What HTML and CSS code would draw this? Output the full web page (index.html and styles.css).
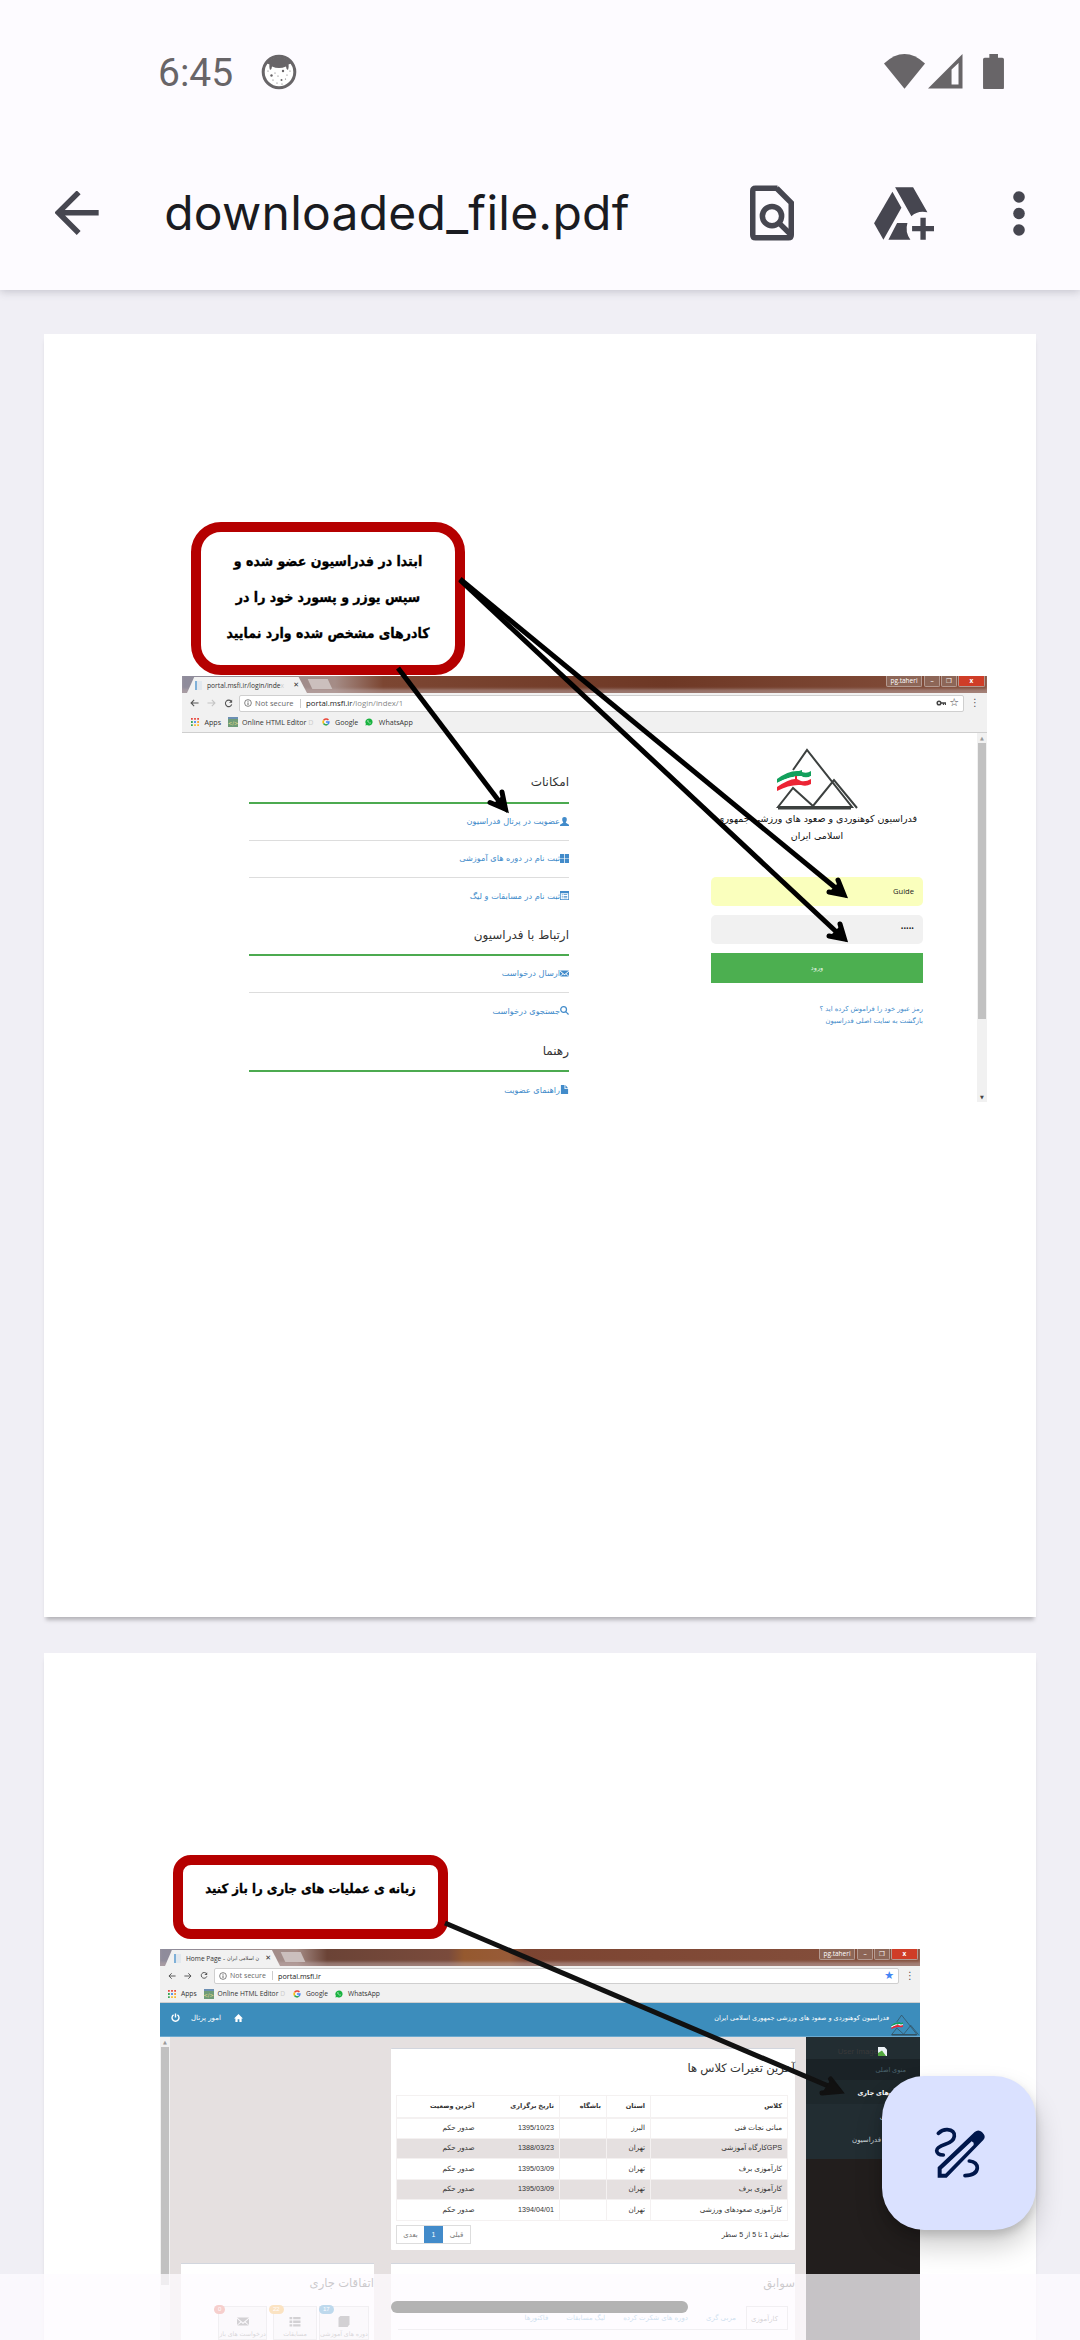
FILE: index.html
```html
<!DOCTYPE html>
<html lang="en">
<head>
<meta charset="utf-8">
<title>downloaded_file.pdf</title>
<link rel="stylesheet" href="styles.css">
</head>
<body>
<svg width="0" height="0" class="defs">
  <symbol id="logo" viewBox="0 0 82 62">
    <g fill="none" stroke="currentColor" stroke-width="2">
      <path d="M17 22 31 2 76 59H2L17 40 37 58 58 32 81 60"/>
      <path d="M2 60H75" stroke-width="3"/>
    </g>
    <path d="M1 31Q13 22 23 23L26 22V24Q31 26 35 23V28Q30 31 25 28Q14 28 1 35Z" fill="#12a05c"/>
    <path d="M1 35Q14 28 25 28Q30 31 35 28V32Q30 35 25 32Q14 32 1 38Z" fill="#fff"/>
    <path d="M1 39Q13 31 19 31V28H21V31L25 33Q30 34 35 31V36Q30 39 25 37Q14 36 1 43Z" fill="#ec2434"/>
  </symbol>
  <symbol id="back" viewBox="0 0 10 8"><path d="M9.5 4H1.2M4.6.6 1.2 4l3.4 3.4" fill="none" stroke="currentColor" stroke-width="1.2"/></symbol>
  <symbol id="reload" viewBox="0 0 10 10"><path d="M8 2.6A3.6 3.6 0 1 0 8.6 6" fill="none" stroke="#555" stroke-width="1.2"/><path d="M9 .8V4.3H5.5Z" fill="#555"/></symbol>
  <symbol id="info" viewBox="0 0 10 10"><circle cx="5" cy="5" r="4.2" fill="none" stroke="#555" stroke-width=".9"/><path d="M5 4.3V7.6M5 2.3V3.4" stroke="#555" stroke-width="1.1"/></symbol>
  <symbol id="apps" viewBox="0 0 9 9">
    <path d="M0 0h2v2H0zM3.5 0h2v2h-2zM7 0h2v2H7z" fill="#e8453c"/>
    <path d="M0 3.5h2v2H0z" fill="#3aa757"/><path d="M3.5 3.5h2v2h-2z" fill="#4688f1"/><path d="M7 3.5h2v2H7z" fill="#f5a13c"/>
    <path d="M0 7h2v2H0z" fill="#3aa757"/><path d="M3.5 7h2v2h-2zM7 7h2v2H7z" fill="#f9bb2d"/>
  </symbol>
  <symbol id="google" viewBox="0 0 10 10" fill="none" stroke-width="1.9">
    <path d="M8 2.6A3.6 3.6 0 0 0 2 3.1" stroke="#ea4335"/><path d="M2 3.1A3.6 3.6 0 0 0 2 6.9" stroke="#fbbc05"/>
    <path d="M2 6.9A3.6 3.6 0 0 0 7.3 7.8" stroke="#34a853"/><path d="M7.3 7.8A3.6 3.6 0 0 0 8.6 5H5" stroke="#4285f4"/>
  </symbol>
  <symbol id="whatsapp" viewBox="0 0 10 10"><path d="M5 .5A4.5 4.5 0 1 1 2.7 8.9L.5 9.5 1.1 7.3A4.5 4.5 0 0 1 5 .5Z" fill="#18b33f"/><path d="M3.3 2.7Q2.6 3.6 3.6 5T6.4 7Q7.3 6.7 7.2 6L6 5.6 5.4 6.2Q4.3 5.7 4 4.8L4.4 4.2 4 2.8Z" fill="#fff"/></symbol>
  <symbol id="mail" viewBox="0 0 12 10"><path d="M0 1H12L6 6Z M0 2.3 3.4 5.2 0 8.4ZM12 2.3 8.6 5.2 12 8.4ZM.3 9 4.2 5.9 6 7.4 7.8 5.9 11.7 9Z" fill="currentColor"/></symbol>
</svg>

<header class="top">
  <div class="status">
    <span class="clock">6:45</span>
    <svg class="face" viewBox="0 0 36 36"><circle cx="18" cy="18" r="15.8" fill="#fff" stroke="#686568" stroke-width="3"/><path d="M5 9Q18-3 31 9L27.500 10.500Q28 13 27 16 25 15 25 12.500 18 15.500 11 12.500 11 15 9 16 8 13 8.500 10.500Z" fill="#686568"/><g fill="#686568"><circle cx="10.500" cy="21.500" r="1.200"/><circle cx="22" cy="17" r="1.200"/><circle cx="20.500" cy="26" r="1"/><circle cx="14" cy="19" r=".6"/><circle cx="26" cy="21" r=".6"/><circle cx="17" cy="22" r=".6"/><circle cx="24.500" cy="25" r=".6"/><circle cx="12" cy="26" r=".6"/><circle cx="16" cy="29" r=".6"/><circle cx="7" cy="17" r=".6"/><circle cx="29" cy="17" r=".6"/><circle cx="21" cy="30" r=".6"/></g></svg>
    <svg class="wifi" viewBox="0 0 122 104"><path d="M0 28Q61-28 122 28L61 103Z"/></svg>
    <svg class="signal" viewBox="0 0 104 104"><path fill-rule="evenodd" d="M0 104 104 0V104ZM71 92H92V27L71 47Z"/></svg>
    <svg class="battery" viewBox="0 0 63 107"><path d="M19 0H45V11H58Q63 11 63 16V101Q63 107 58 107H5Q0 107 0 101V16Q0 11 5 11H19Z"/></svg>
  </div>
  <div class="appbar">
    <svg class="arrow" viewBox="0 0 131 130"><path d="M131 65H12M71 4 10 65 71 126" fill="none" stroke="#464650" stroke-width="16.500"/></svg>
    <h1>downloaded_file.pdf</h1>
    <svg class="find" viewBox="4 2 16 20"><g fill="none" stroke="#464650" stroke-width="2"><path d="M14 3H6Q5 3 5 4V20Q5 21 6 21H18Q19 21 19 20V8.300L13.700 3"/><circle cx="12" cy="13.100" r="3.500"/><path d="M14.300 15.400 19 20"/></g></svg>
    <svg class="drive" viewBox="460 435 181 159" fill="#464650"><path d="M515 449 542 497 488 593 460 544Z"/><path d="M523 436H577L620 511Q590 505 572 523Z"/><path d="M529 543H560Q552 570 569 593H503Z"/><path d="M599 527h16v25h25v16h-25v25h-16v-25h-25v-16h25z"/></svg>
    <svg class="dots" viewBox="0 0 12 45" fill="#464650"><circle cx="6" cy="6" r="5.800"/><circle cx="6" cy="22.500" r="5.800"/><circle cx="6" cy="39" r="5.800"/></svg>
  </div>
</header>

<main class="doc">
  <section class="page page-one">
    <div class="callout callout-one" lang="fa" dir="rtl">ابتدا در فدراسیون عضو شده و<br>سپس یوزر و پسورد خود را در<br>کادرهای مشخص شده وارد نمایید</div>
    <div class="browser browser-one">
      <div class="tabs">
        <div class="tab"><i class="fav"></i><span>portal.msfi.ir/login/inde<em>x</em></span><b>✕</b></div><i class="newtab"></i>
        <div class="win"><span>pg.taheri</span><span class="mn">–</span><span class="mx">❐</span><span class="cl">x</span></div>
      </div>
      <div class="bar">
        <svg class="nav"><use href="#back"/></svg><svg class="nav off flip"><use href="#back"/></svg><svg class="nav re"><use href="#reload"/></svg>
        <div class="url"><svg><use href="#info"/></svg><span class="ns">Not secure</span><span class="addr">portal.msfi.ir<em>/login/index/1</em></span><svg class="key" viewBox="0 0 10 8"><path d="M5 4H9.500V6M7.500 4V6" fill="none" stroke="#444" stroke-width="1.300"/><circle cx="3" cy="4" r="1.800" fill="none" stroke="#444" stroke-width="1.500"/></svg><span class="star">☆</span></div>
        <span class="menu">⋮</span>
      </div>
      <div class="marks"><svg><use href="#apps"/></svg><span>Apps</span><i class="code">&lt;/&gt;</i><span class="ed">Online HTML Editor <em>D</em></span><svg><use href="#google"/></svg><span>Google</span><svg><use href="#whatsapp"/></svg><span>WhatsApp</span></div>
      <div class="login" lang="fa" dir="rtl">
        <div class="rail"><i>▲</i><div class="thumb"></div><i class="down">▼</i></div>
        <div class="form">
          <svg class="logo"><use href="#logo"/></svg>
          <p class="org">فدراسیون کوهنوردی و صعود های ورزشی جمهوری<br>اسلامی ایران</p>
          <div class="field user">Guide</div>
          <div class="field pass">•••••</div>
          <div class="enter">ورود</div>
          <p class="help">رمز عبور خود را فراموش کرده اید ؟<br>بازگشت به سایت اصلی فدراسیون</p>
        </div>
        <div class="links">
          <h2>امکانات</h2>
          <a><svg viewBox="0 0 10 10"><path d="M5 0Q8 0 7.500 3.500 7 5 6.500 5.500V6.500L10 8.500V10H0V8.500L3.500 6.500V5.500Q3 5 2.500 3.500 2 0 5 0Z"/></svg>عضویت در پرتال فدراسیون</a>
          <a><svg viewBox="0 0 10 10"><path d="M0 0h4.600v4.600H0zM5.400 0H10v4.600H5.400zM0 5.400h4.600V10H0zM5.400 5.400H10V10H5.400z"/></svg>ثبت نام در دوره های آموزشی</a>
          <a class="last"><svg viewBox="0 0 10 10"><path fill-rule="evenodd" d="M0 0H10V10H0ZM.8 2.500V9.200H9.200V2.500ZM2 3.600H3V4.600H2ZM4 3.600H8V4.400H4ZM2 5.500H3V6.300H2ZM4 5.500H8V6.300H4ZM2 7.300H3V8H2ZM4 7.300H8V8H4Z"/></svg>ثبت نام در مسابقات و لیگ</a>
          <h2 class="second">ارتباط با فدراسیون</h2>
          <a><svg viewBox="0 0 12 10"><use href="#mail" width="12" height="10"/></svg>ارسال درخواست</a>
          <a class="last"><svg viewBox="0 0 10 10"><circle cx="4" cy="4" r="3.200" fill="none" stroke="#428bca" stroke-width="1.400"/><path d="M6 6.800 7 6 10 9 9 10Z"/></svg>جستجوی درخواست</a>
          <h2 class="third">رهنما</h2>
          <a class="last"><svg viewBox="0 0 10 10"><path d="M1 0H5V4.500H9V10H1ZM6 0 9 3.500H6Z"/></svg>راهنمای عضویت</a>
        </div>
      </div>
    </div>
    <svg class="marker" viewBox="44 334 992 1283"><g fill="none" stroke="#000" stroke-width="5">
      <path d="M398 668 505 809"/><path d="M460 579 843 894"/><path d="M460 580 844 939"/></g>
      <g fill="none" stroke="#000" stroke-width="5" stroke-linecap="round"><path d="M502 792 505.500 809 490 802.500M838 880 844 895 829 892M840 924 844.500 939 829 936"/></g>
      <path d="M507 813 494 803 503 795ZM847 898 830 891 838 883ZM847 942 831 935 839 927Z"/>
    </svg>
  </section>

  <section class="page page-two">
    <div class="callout callout-two" lang="fa" dir="rtl">زبانه ی عملیات های جاری را باز کنید</div>
    <div class="browser browser-two">
      <div class="tabs">
        <div class="tab"><i class="fav"></i><span class="home">Home Page - </span><bdi>ن اسلامی ایران</bdi><b>✕</b></div><i class="newtab"></i>
        <div class="win"><span>pg.taheri</span><span class="mn">–</span><span class="mx">❐</span><span class="cl">x</span></div>
      </div>
      <div class="bar">
        <svg class="nav"><use href="#back"/></svg><svg class="nav flip"><use href="#back"/></svg><svg class="nav re"><use href="#reload"/></svg>
        <div class="url"><svg><use href="#info"/></svg><span class="ns">Not secure</span><span class="addr">portal.msfi.ir</span><span class="star on">★</span></div>
        <span class="menu">⋮</span>
      </div>
      <div class="marks"><svg><use href="#apps"/></svg><span>Apps</span><i class="code">&lt;/&gt;</i><span class="ed">Online HTML Editor <em>D</em></span><svg><use href="#google"/></svg><span>Google</span><svg><use href="#whatsapp"/></svg><span>WhatsApp</span></div>
      <div class="blue" lang="fa" dir="rtl">
        <svg class="logo"><use href="#logo"/></svg><span class="name">فدراسیون کوهنوردی و صعود های ورزشی جمهوری اسلامی ایران</span>
        <svg class="house" viewBox="0 0 10 9"><path d="M5 0 10 5H8.500V9H6V6H4V9H1.500V5H0Z" fill="#fff"/></svg><span class="portal">امور پرتال</span>
        <svg class="power" viewBox="0 0 9 9"><path d="M2.600 1.800A3.500 3.500 0 1 0 6.400 1.800M4.500 .5V4.500" fill="none" stroke="#fff" stroke-width="1.400"/></svg>
      </div>
      <div class="dash" lang="fa" dir="rtl">
        <aside class="side">
          <div class="user-row"><svg viewBox="0 0 9 9"><path d="M0 0H6.500L9 2.500V9H0Z" fill="#eef3f8"/><path d="M0 9V6L4 3.500 8 9Z" fill="#53a83f"/></svg><span>User Image</span></div>
          <div class="menu-head">منوی اصلی</div>
          <div class="menu-item active">عملیات‌های جاری</div>
          <div class="menu-item">شخصی</div>
          <div class="menu-item wide">پرتال فدراسیون</div>
        </aside>
        <div class="col-main">
          <div class="card changes">
            <h3>آخرین تغیرات کلاس ها</h3>
            <table>
              <colgroup><col class="c1"><col class="c2"><col class="c3"><col class="c4"><col class="c5"></colgroup>
              <tr><th>کلاس</th><th>استان</th><th>باشگاه</th><th>تاریخ برگزاری</th><th>آخرین وضعیت</th></tr>
              <tr><td>مبانی نجات فنی</td><td>البرز</td><td></td><td>1395/10/23</td><td>صدور حکم</td></tr>
              <tr><td><bdo dir="ltr">GPS</bdo>کارگاه آموزشی</td><td>تهران</td><td></td><td>1388/03/23</td><td>صدور حکم</td></tr>
              <tr><td>کارآموزی برف</td><td>تهران</td><td></td><td>1395/03/09</td><td>صدور حکم</td></tr>
              <tr><td>کارآموزی برف</td><td>تهران</td><td></td><td>1395/03/09</td><td>صدور حکم</td></tr>
              <tr><td>کارآموزی صعودهای ورزشی</td><td>تهران</td><td></td><td>1394/04/01</td><td>صدور حکم</td></tr>
            </table>
            <div class="foot"><span>نمایش 1 تا 5 از 5 سطر</span><div class="pager"><span>قبلی</span><b>1</b><span>بعدی</span></div></div>
          </div>
          <div class="card history">
            <h3>سوابق</h3>
            <div class="subtabs"><b>کارآموزی</b><span>مربی گری</span><span>دوره های شکرت کرده</span><span>لیگ مسابقات</span><span>فاکتورها</span></div>
          </div>
        </div>
        <div class="col-left">
          <div class="card events">
            <h3>اتفاقات جاری</h3>
            <div class="tiles">
              <div class="tile t1"><em>17</em><svg viewBox="0 0 12 12"><path d="M2 0H12V9L10 12H0V2Z"/></svg>دوره های آموزشی</div>
              <div class="tile t2"><em>22</em><svg viewBox="0 0 12 12"><path d="M0 1h3v2.500H0zM4 1h8v2.500H4zM0 5h3v2.500H0zM4 5h8v2.500H4zM0 9h3v2.500H0zM4 9h8v2.500H4z"/></svg>مسابقات</div>
              <div class="tile t3"><em>0</em><svg viewBox="0 0 12 10"><use href="#mail" width="12" height="10"/></svg>درخواست های باز</div>
            </div>
          </div>
        </div>
        <div class="rail"><i>▲</i><div class="thumb"></div></div>
      </div>
    </div>
    <svg class="marker" viewBox="44 1653 992 687"><g fill="none" stroke="#111" stroke-width="5"><path d="M445 1923 840 2091"/><path d="M830.500 2079 840 2091.500 822 2093" stroke-linecap="round"/></g><path d="M844 2093 822 2093 831 2079Z" fill="#111"/></svg>
  </section>
</main>

<div class="fab"><svg viewBox="460 382 154 154" fill="none" stroke="#00174b" stroke-width="11" stroke-linecap="round"><path d="M473 401Q486 389 500 390Q523 392 521 410Q519 426 494 434Q468 443 468 453Q469 466 488 466"/><path d="M566 484Q590 487 590 505Q588 527 553 528"/><path d="M471 534V503L582 397Q593 388 604 397L609 403Q616 412 608 421L498 534ZM483 522H494L579 436V429L573 425 483 509Z" fill="#00174b" fill-rule="evenodd" stroke="none"/></svg></div>
<div class="navbar"><i></i></div>
</body>
</html>
```

FILE: styles.css
```css
* { box-sizing: border-box; }
html, body { margin: 0; height: 2340px; overflow: hidden; }
body { position: relative; background: #f0eff5; font-family: "Open Sans", "DejaVu Sans", sans-serif; }
h1, h2, h3, p { margin: 0; font-weight: 400; }
i, em { font-style: normal; }
svg { display: block; flex: none; }
.defs { position: absolute; }

.top { position: relative; z-index: 2; height: 290px; background: #fdfbff; box-shadow: 0 1px 9px rgba(60, 60, 80, .28); }
.status { display: flex; align-items: center; height: 143px; padding: 0 76.500px 0 158px; color: #686568; fill: #686568; }
.clock { font: 39px/1 Roboto, sans-serif; letter-spacing: 0; margin-top: 3px; }
.face { width: 36px; height: 36px; margin-left: 28px; }
.wifi { width: 41px; height: 35px; margin-left: auto; }
.signal { width: 34.500px; height: 34.500px; margin-left: 3.500px; }
.battery { width: 21px; height: 35.500px; margin-left: 20px; }
.appbar { display: flex; align-items: center; height: 140px; padding: 0 55px; }
.arrow { width: 43.700px; height: 43.300px; }
h1 { margin-left: 65.500px; font: 400 48px/60px Inter, sans-serif; letter-spacing: .25px; color: #1a1b21; }
.find { width: 44px; height: 56px; margin-left: auto; }
.drive { width: 60.500px; height: 53px; margin-left: 80px; }
.dots { width: 12px; height: 45px; margin-left: 79px; }

.doc { display: flex; flex-direction: column; gap: 36px; padding: 44px 44px 0; }
.page { position: relative; display: flow-root; flex: none; background: #fff; box-shadow: 0 5px 4px -2px rgba(0, 0, 0, .25); }
.page-one { height: 1283px; }
.page-two { height: 687px; }
.marker { position: absolute; inset: 0; width: 100%; height: 100%; }
.callout { border: 10px solid #b50000; background: #fff; color: #000; text-align: center; font-family: "DejaVu Sans Condensed", "DejaVu Sans", sans-serif; font-weight: 700; white-space: nowrap; -webkit-text-stroke: .3px #000; }
.callout-one { width: 274px; height: 153px; margin: 188px 0 0 147px; border-radius: 30px; padding-top: 11px; font-size: 14px; line-height: 36px; }
.callout-two { width: 275px; height: 84px; margin: 202px 0 0 129px; border-radius: 18px; padding-top: 7px; font-size: 13px; line-height: 34px; }

.browser { overflow: hidden; background: #f1f1f1; color: #444; }
.browser-one { width: 805px; height: 426px; margin: 1px 0 0 138px; }
.browser-two { width: 760px; height: 391px; margin: 10px 0 0 116px; }
.tabs { display: flex; align-items: flex-end; height: 17px; padding-left: 5px; background: linear-gradient(90deg, #8e8c9c, #a58c86 19%, #7c4632 25%, #6e3825 60%, #85503d); box-shadow: inset 0 -4px 3px rgba(190, 170, 170, .55); }
.tab { display: flex; align-items: center; width: 120px; height: 16px; padding: 0 8px; background: #f1f1f1; clip-path: polygon(6% 0, 93% 0, 100% 100%, 0 100%); font-size: 6.700px; color: #333; white-space: nowrap; }
.tab em { color: #ccc; }
.tab b { margin-left: auto; font: 7px "DejaVu Sans"; }
.fav { width: 7px; height: 9px; margin-right: 5px; border-left: 2px solid #7fb0d8; background: #e2e8ee; }
.newtab { width: 20px; height: 10px; margin: 0 0 4px 3px; background: #cbbfbd; transform: skewX(25deg); }
.win { display: flex; align-self: flex-start; height: 11px; margin-left: auto; margin-right: 2px; gap: 1px; color: #fff; font: 6.500px/10px "Open Sans", "DejaVu Sans"; text-align: center; }
.win span { width: 16px; border: 1px solid #b49a91; border-top: 0; background: #8d6657; border-radius: 0 0 2px 2px; line-height: 9px; }
.win span:first-child { width: 36px; }
.win .mn { margin-left: 1px; }
.win .cl { width: 27px; background: #cf3d27; font-weight: 700; }
.bar { display: flex; align-items: center; height: 20px; padding-left: 8px; color: #555; }
.nav { width: 9px; height: 8px; margin-right: 8px; }
.nav.re { width: 9px; height: 9px; margin-right: 6px; }
.flip { transform: scaleX(-1); }
.off { color: #c4c4c4; }
.url { display: flex; align-items: center; width: 725px; height: 17px; padding: 0 4px; border: 1px solid #cfcfcf; border-radius: 2px; background: #fff; font-size: 7.800px; }
.url svg { width: 8px; height: 8px; margin-right: 3px; }
.ns { width: 46px; padding-right: 4px; border-right: 1px solid #ccc; line-height: 9px; color: #666; white-space: nowrap; font-size: 7.500px; letter-spacing: .05px; }
.addr { padding-left: 5px; color: #222; }
.addr em { color: #888; }
.url .key { width: 10px; margin-left: auto; }
.star { font: 11px/10px "DejaVu Sans"; color: #444; }
.star.on { margin-left: auto; color: #4285f4; }
.menu { margin-left: 6px; font: 10px/10px "DejaVu Sans"; }
.marks { display: flex; align-items: center; height: 20px; padding: 0 9px 1px; border-bottom: 1px solid #cfcfcf; font-size: 7.100px; color: #333; white-space: nowrap; }
.marks svg { width: 8px; height: 8px; margin-right: 5.500px; }
.marks span { margin-right: 7px; }
.marks em { color: #ccc; }
.code { width: 10px; height: 10px; margin-right: 4px; background: #6f9c78; color: #e9dc8a; font: 5px/8px "DejaVu Sans"; text-align: center; border-top: 2px solid #6b8fb3; }
.marks .ed { margin-right: 8px; }

.login { display: flex; height: 369px; background: #fff; font-family: "DejaVu Sans", sans-serif; }
.rail { display: flex; flex-direction: column; width: 10px; background: #f1f1f1; align-items: center; }
.rail i { height: 10px; font: 5px/10px "DejaVu Sans"; color: #999; }
.rail .thumb { width: 8px; height: 276px; background: #c1c1c1; }
.rail .down { margin-top: auto; color: #444; }
.form { width: 212px; margin-right: 54px; padding-top: 15px; }
.form .logo { width: 82px; height: 62px; margin: 0 auto; color: #3c403f; }
.org { height: 67px; text-align: center; white-space: nowrap; font-size: 9.500px; line-height: 17px; color: #111; }
.field { height: 29px; padding-right: 9px; border-radius: 5px; font: 7.600px/28px "Open Sans"; color: #222; margin-bottom: 9px; }
.user { background: #faffbd; }
.pass { background: #f1f1f1; font-size: 7px; }
.enter { height: 30px; background: #4caf50; color: #e4f5e4; text-align: center; font-size: 6.500px; line-height: 30px; }
.help { margin-top: 20px; font-size: 6.800px; line-height: 12px; color: #428bca; white-space: nowrap; }
.links { width: 320px; margin-right: 142px; }
.links h2 { height: 38px; margin-top: 33px; border-bottom: 2px solid #4caa50; font-size: 12px; line-height: 32px; color: #333; }
.links .second { margin-top: 1px; height: 40px; line-height: 38px; }
.links .third { margin-top: 2px; height: 40px; line-height: 38px; }
.links a { display: flex; align-items: center; height: 37px; padding-bottom: 2px; border-bottom: 1px solid #ddd; font-size: 8.200px; color: #428bca; white-space: nowrap; }
.links a.last { border: 0; }
.links a svg { width: 9px; height: 9px; fill: #428bca; }

.browser-two .tabs { background: linear-gradient(90deg, #8e8c9c, #a58c86 18%, #6b4336 22%, #7a4b3c 38%, #95592f 40%, #985b38 46%, #7c4431 48%, #85503d); }
.browser-two .tab { width: 115px; padding: 0 9px; }
.home { font-size: 6.600px; margin-right: 2px; }
.tab bdi { color: #444; font: 5.400px "DejaVu Sans Condensed"; }
.browser-two .bar { height: 19px; padding-left: 8px; }
.browser-two .nav { width: 8px; }
.browser-two .url { width: 685px; height: 16px; font-size: 7.200px; }
.browser-two .ns { width: 43px; font-size: 7px; }
.browser-two .marks { height: 18px; padding-left: 8px; padding-bottom: 0; font-size: 6.700px; }
.browser-two .marks svg { margin-right: 5px; }
.blue { display: flex; align-items: center; height: 34px; padding: 0 1px 0 11px; background: #3c8dbc; border-bottom: 1px solid #6ba9cf; color: #fff; font-family: "DejaVu Sans"; }
.blue .logo { width: 28px; height: 22px; align-self: flex-end; color: #334a55; }
.name { margin-right: 2px; font-size: 6.500px; margin-top: -3px; }
.house { width: 9px; height: 8px; margin-right: auto; margin-top: -4px; }
.portal { margin: -3px 13px 0 11px; font-size: 7px; }
.power { width: 9px; height: 9px; margin-top: -4px; }
.dash { display: flex; height: 304px; background: #e5e0e0; font-family: "Liberation Sans", "DejaVu Sans", sans-serif; }
.dash .rail { margin-right: auto; }
.dash .rail .thumb { height: 238px; }
.side { width: 114px; background: #221e1d; color: #fff; font-size: 7px; }
.user-row { display: flex; align-items: center; height: 22px; padding: 6px 33px 0 0; background: #222d32; color: #39393a; font-size: 7.800px; }
.user-row svg { width: 9px; height: 9px; }
.menu-head { height: 21px; padding-right: 14px; background: #1a2226; color: #4b646f; line-height: 22px; font-size: 6.500px; }
.menu-item { height: 24px; padding-right: 18px; background: #222d32; color: #cfdadf; line-height: 26px; font-size: 7px; }
.menu-item.active { padding-right: 8px; background: #1e282c; color: #fff; font-weight: 700; font-size: 6.500px; }
.menu-item.wide { height: 31px; line-height: 24px; padding-right: 22px; }
.col-main { width: 404px; margin-right: 11px; padding-top: 11px; }
.card { background: #fff; border-top: 1px solid #d2d6de; }
.changes { height: 202px; border-radius: 1px; margin-bottom: 13px; }
.card h3 { font-size: 11.600px; line-height: 38px; height: 46px; color: #333; }
table { width: 391px; margin-right: 7px; border-collapse: collapse; table-layout: fixed; font-size: 7.200px; color: #333; }
.c1 { width: 137px; } .c2 { width: 44px; } .c3 { width: 47px; } .c4 { width: 80px; } .c5 { width: 83px; }
th, td { height: 20.500px; padding: 0 5px; border: 1px solid #f4f1f1; text-align: right; white-space: nowrap; line-height: 12px; }
th { height: 22px; font-size: 6.500px; border-bottom: 2px solid #f4f1f1; }
th:nth-child(5), td:nth-child(5) { border-right: 0; } th:nth-child(4), td:nth-child(4) { border-left: 0; }
tr:nth-child(odd) td { background: #e5e0e0; }
.foot { display: flex; justify-content: space-between; align-items: center; height: 28px; padding: 0 6px 0 5px; font-size: 7px; color: #333; }
.pager { display: flex; border: 1px solid #ddd; color: #777; line-height: 17px; }
.pager span { width: 27px; text-align: center; }
.pager b { width: 19px; background: #428bca; color: #fff; text-align: center; font-weight: 400; }
.history { height: 90px; }
.history h3, .events h3 { height: 42px; }
.subtabs { display: flex; margin: 0 7px; height: 24px; border-bottom: 1px solid #ccc; color: #3c8dbc; font-size: 7px; line-height: 23px; }
.subtabs b { width: 42px; padding-right: 9px; border: 1px solid #ccc; border-bottom: 0; color: #555; font-weight: 400; }
.subtabs span { margin-right: 18px; }
.subtabs b + span { margin-right: 10px; }
.col-left { width: 193px; margin-right: 17px; padding-top: 226px; }
.events { height: 90px; }
.tiles { display: flex; margin-right: 5px; gap: 2px; font-size: 6.300px; color: #666; }
.tile { position: relative; display: flex; flex-direction: column; align-items: center; gap: 3px; height: 34px; padding-top: 9px; border: 1px solid #ccc; background: #f4f4f4; white-space: nowrap; }
.tile svg { width: 12px; height: 11px; fill: #555; color: #555; }
.tile em { position: absolute; top: -2px; left: -5px; height: 9px; padding: 0 4px; border-radius: 5px; color: #fff; font-size: 6px; line-height: 9px; }
.t1 { width: 50px; } .t2 { width: 44px; } .t3 { width: 49px; margin-right: 4px; }
.t1 em { background: #0073b7; left: -1px; } .t2 em { background: #f39c12; } .t3 em { background: #dd4b39; }

.fab { position: absolute; left: 882px; top: 2076px; display: grid; place-items: center; width: 154px; height: 154px; border-radius: 42px; background: #dae1ff; box-shadow: 0 16px 28px rgba(0, 0, 0, .2), 0 5px 9px rgba(0, 0, 0, .14); }
.fab svg { width: 51.300px; height: 51.300px; margin-top: -1px; margin-left: 2px; }
.navbar { position: absolute; left: 0; top: 2274px; width: 100%; height: 66px; padding: 27px 0 0 391px; background: rgba(254, 251, 255, .75); }
.navbar i { display: block; width: 297px; height: 12px; border-radius: 6px; background: #b3b3b3; }
```
